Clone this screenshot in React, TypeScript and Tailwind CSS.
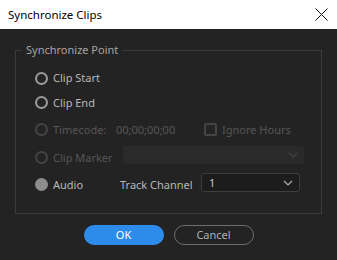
import React from "react";

const Radio = ({ state }: { state: "on" | "off" | "disabled" | "filled" }) => {
  if (state === "filled")
    return <span className="block w-[13px] h-[13px] rounded-full bg-[#8d8d8d] shrink-0" />;
  return (
    <span
      className={
        "block w-[13px] h-[13px] rounded-full border-2 shrink-0 " +
        (state === "disabled" ? "border-[#444444]" : "border-[#9c9c9c]")
      }
    />
  );
};

const Chevron = ({ color }: { color: string }) => (
  <svg width="10" height="6" viewBox="0 0 10 6" fill="none">
    <path d="M1 1l4 4 4-4" stroke={color} strokeWidth="1.2" />
  </svg>
);

export default function App() {
  return (
    <div
      className="w-[337px] h-[260px] flex flex-col overflow-hidden text-[11px] leading-[16px]"
      style={{ fontFamily: '"Noto Sans", "Open Sans", sans-serif' }}
    >
      <div className="h-[29px] bg-white flex items-center justify-between pl-[8px] pr-[9px] shrink-0">
        <span className="text-black text-[11.5px]">Synchronize Clips</span>
        <svg width="13" height="13" viewBox="0 0 13 13" fill="none">
          <path d="M0.5 0.5l12 12M12.5 0.5l-12 12" stroke="#111" strokeWidth="1" />
        </svg>
      </div>
      <div className="flex-1 bg-[#232323] flex flex-col pt-[13px] px-[15px]">
        <fieldset className="w-[307px] border border-[#3a3a3a] pl-[19px] pb-[15px]">
          <legend className="ml-[-13px] px-[4px] text-[#a6a6a6]">Synchronize Point</legend>
          <div className="flex flex-col pt-[8px]">
            <div className="h-[24px] flex items-center gap-[5px]">
              <Radio state="off" />
              <span className="text-[#b8b8b8]">Clip Start</span>
            </div>
            <div className="h-[25px] flex items-center gap-[5px]">
              <Radio state="off" />
              <span className="text-[#b8b8b8]">Clip End</span>
            </div>
            <div className="h-[29px] flex items-center">
              <div className="w-[81px] flex items-center gap-[5px]">
                <Radio state="disabled" />
                <span className="text-[#565656]">Timecode:</span>
              </div>
              <span className="w-[88px] text-[#565656]">00;00;00;00</span>
              <span className="w-[13px] h-[13px] border-2 border-[#444444] rounded-[2px]" />
              <span className="ml-[5px] text-[#565656]">Ignore Hours</span>
            </div>
            <div className="h-[27px] flex items-center">
              <div className="w-[88px] flex items-center gap-[5px]">
                <Radio state="disabled" />
                <span className="text-[#565656]">Clip Marker</span>
              </div>
              <div className="self-start mt-[2px] w-[181px] h-[18px] bg-[#2a2a2a] rounded-[2px] flex items-center justify-end pr-[6px]">
                <Chevron color="#444444" />
              </div>
            </div>
            <div className="h-[27px] flex items-center">
              <div className="w-[85px] flex items-center gap-[5px]">
                <Radio state="filled" />
                <span className="text-[#b8b8b8]">Audio</span>
              </div>
              <span className="w-[81px] text-[#b8b8b8]">Track Channel</span>
              <div className="self-start mt-[2px] w-[99px] h-[19px] bg-[#1c1c1c] border border-[#3d3d3d] rounded-[3px] flex items-center justify-between pl-[7px] pr-[6px]">
                <span className="text-[#c8c8c8]">1</span>
                <Chevron color="#b0b0b0" />
              </div>
            </div>
          </div>
        </fieldset>
        <div className="mt-[11px] flex justify-center gap-[10px]">
          <div className="w-[80px] h-[20px] rounded-full bg-[#2d8ceb] text-white flex items-center justify-center">
            OK
          </div>
          <div className="w-[80px] h-[20px] rounded-full border-[1.5px] border-[#6e6e6e] text-[#b0b0b0] flex items-center justify-center">
            Cancel
          </div>
        </div>
      </div>
    </div>
  );
}
